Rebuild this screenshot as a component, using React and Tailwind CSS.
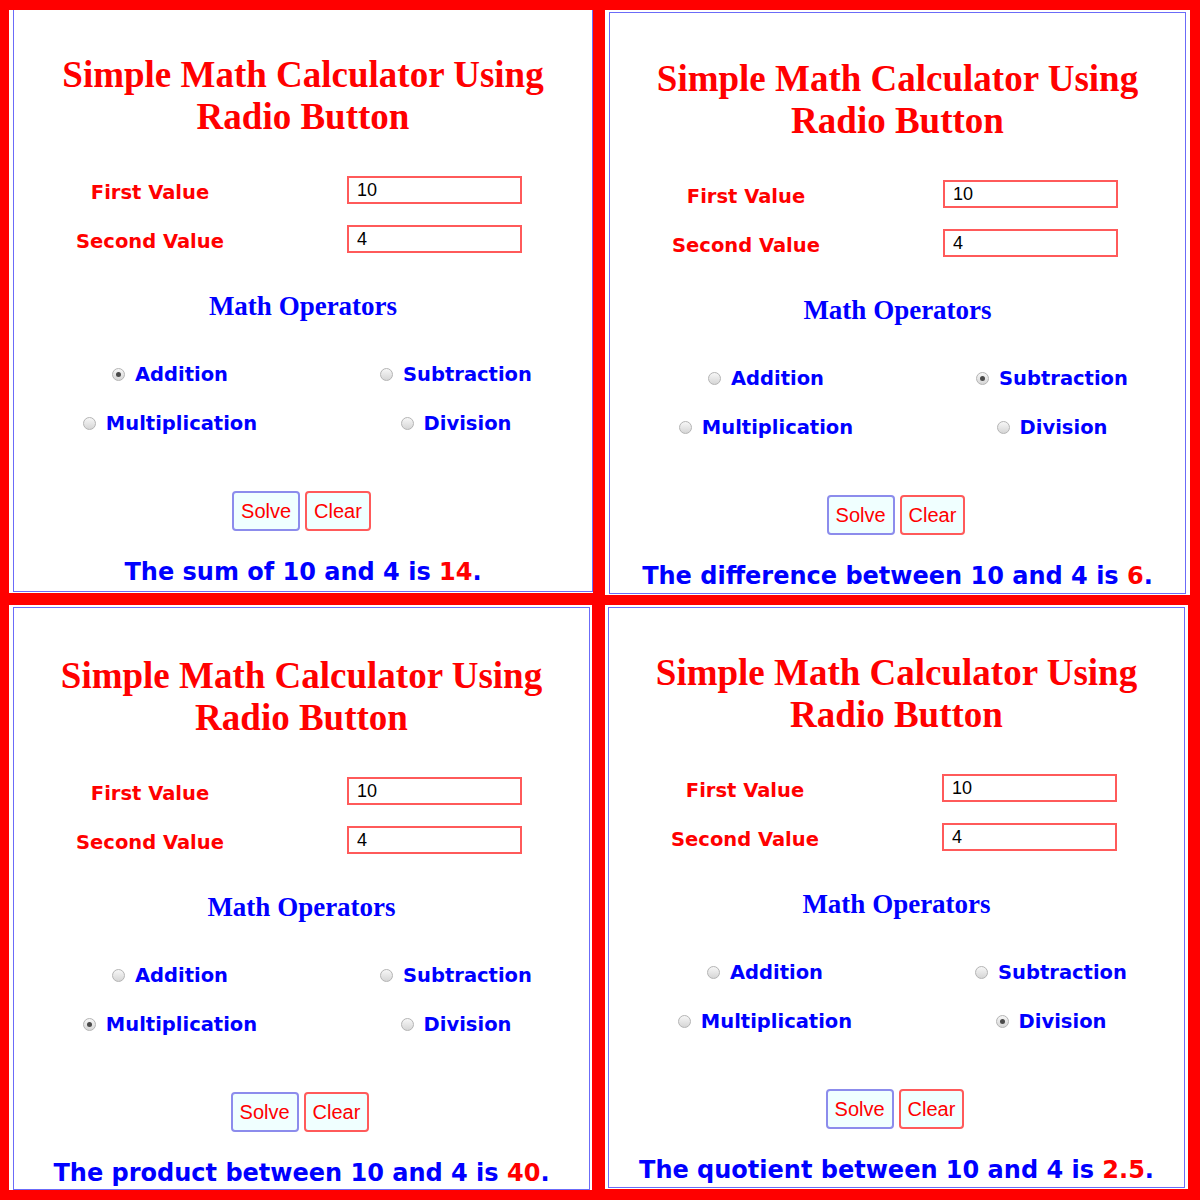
const comic = { fontFamily: '"DejaVu Sans", "Liberation Sans", sans-serif' }

const PANELS = [
  {
    id: 'add',
    checked: 'Addition',
    text: 'The sum of 10 and 4 is ',
    answer: '14',
    wrap: 'pl-[9px] pr-[6px] pt-[10px] pb-[7px]',
    white: 'pl-[4px] pr-0 pt-0 pb-[1px]',
    box: 'border border-t-0 pt-[44px]',
  },
  {
    id: 'sub',
    checked: 'Subtraction',
    text: 'The difference between 10 and 4 is ',
    answer: '6',
    wrap: 'pl-[6px] pr-[10px] pt-[10px] pb-[5px]',
    white: 'pl-[4px] pr-[4px] pt-[2px] pb-[1px]',
    box: 'border pt-[45px]',
  },
  {
    id: 'mul',
    checked: 'Multiplication',
    text: 'The product between 10 and 4 is ',
    answer: '40',
    wrap: 'pl-[9px] pr-[7px] pt-[5px] pb-[10px]',
    white: 'pl-[4px] pr-[2px] pt-[2px] pb-0',
    box: 'border pt-[47px]',
  },
  {
    id: 'div',
    checked: 'Division',
    text: 'The quotient between 10 and 4 is ',
    answer: '2.5',
    wrap: 'pl-[6px] pr-[12px] pt-[5px] pb-[11px]',
    white: 'pl-[3px] pr-[3px] pt-[2px] pb-[1px]',
    box: 'border pt-[44px]',
  },
]

function Radio({ on }) {
  return (
    <span className="flex h-[13px] w-[13px] shrink-0 items-center justify-center rounded-full border border-[#b4b4b4] bg-linear-to-b from-[#f7f7f7] to-[#d6d6d6]">
      {on ? <span className="h-[5px] w-[5px] rounded-full bg-[#4a4a4a]" /> : null}
    </span>
  )
}

function Option({ label, on }) {
  return (
    <div className="flex h-[49px] items-center justify-center gap-[10px]">
      <Radio on={on} />
      <span className="text-[19.5px] font-bold text-[#0000ff]" style={comic}>
        {label}
      </span>
    </div>
  )
}

function Field({ label, value }) {
  return (
    <div className="flex h-[49px] items-center">
      <div className="w-[272px] text-center text-[19.5px] font-bold text-[#ff0000]" style={comic}>
        {label}
      </div>
      <input
        readOnly
        value={value}
        className="mb-[5px] ml-[61px] h-[28px] w-[175px] border-2 border-[#ff5a5a] bg-white pl-[8px] text-[18px] text-black outline-none"
        style={{ fontFamily: '"Liberation Sans", Arial, sans-serif' }}
      />
    </div>
  )
}

function Panel({ panel }) {
  return (
    <div className={`h-full ${panel.wrap}`}>
      <div className={`h-full bg-white ${panel.white}`}>
        <div className={`flex h-full flex-col border-[#6b6bf8] ${panel.box}`}>
          <h1
            className="text-center text-[37px] font-bold leading-[42px] text-[#ff0000]"
            style={{ fontFamily: '"Liberation Serif", "Times New Roman", serif' }}
          >
            Simple Math Calculator Using
            <br />
            Radio Button
          </h1>

          <div className="mt-[30px]">
            <Field label="First Value" value="10" />
            <Field label="Second Value" value="4" />
          </div>

          <h2
            className="mt-[24px] text-center text-[27px] font-bold leading-[32px] text-[#0000ff]"
            style={{ fontFamily: '"Liberation Serif", "Times New Roman", serif' }}
          >
            Math Operators
          </h2>

          <div className="mt-[28px] grid grid-cols-[286px_286px] pl-[13px]">
            {['Addition', 'Subtraction', 'Multiplication', 'Division'].map((op) => (
              <Option key={op} label={op} on={op === panel.checked} />
            ))}
          </div>

          <div
            className="mt-[43px] flex justify-center gap-[5px] pr-[3px] text-[20px] text-[#ff0000]"
            style={{ fontFamily: '"Liberation Sans", Arial, sans-serif' }}
          >
            <button className="h-[40px] rounded-[4px] border-2 border-[#8c8cec] bg-[#f0ffff] px-[7px]">Solve</button>
            <button className="h-[40px] rounded-[4px] border-2 border-[#ff5a5a] bg-[#f0ffff] px-[7px]">Clear</button>
          </div>

          <p className="mt-[26px] whitespace-nowrap text-center text-[24px] font-bold leading-[30px] text-[#0000ff]" style={comic}>
            {panel.text}
            <span className="text-[#ff0000]">{panel.answer}</span>.
          </p>
        </div>
      </div>
    </div>
  )
}

export default function App() {
  return (
    <div className="grid h-[1200px] w-[1200px] grid-cols-[599px_601px] grid-rows-[600px_600px] overflow-hidden bg-[#ff0000]">
      {PANELS.map((panel) => (
        <div key={panel.id} className="overflow-hidden">
          <Panel panel={panel} />
        </div>
      ))}
    </div>
  )
}
